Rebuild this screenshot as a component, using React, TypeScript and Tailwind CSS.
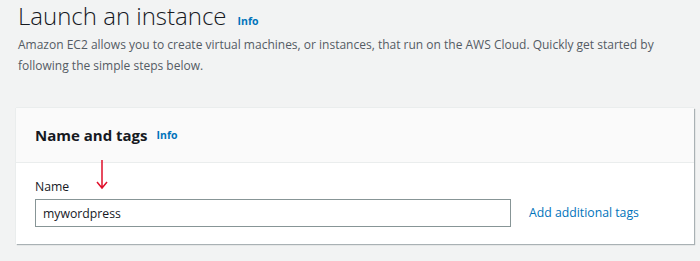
export default function App() {
  return (
    <main
      className="min-h-[261px] w-[700px] bg-[#f2f3f3] pl-[18px] pr-[6px] pt-[1px]"
      style={{ fontFamily: '"Open Sans", "Noto Sans", sans-serif' }}
    >
      <div className="flex items-baseline gap-[11px]">
        <h1 className="text-[24px] font-light leading-[30px] text-[#16191f]">Launch an instance</h1>
        <a href="#" className="text-[10.5px] font-bold text-[#0073bb]">
          Info
        </a>
      </div>

      <p className="mt-[3px] w-[660px] text-[12px] leading-[21px] text-[#545b64]">
        Amazon EC2 allows you to create virtual machines, or instances, that run on the AWS Cloud. Quickly get started by
        following the simple steps below.
      </p>

      <section className="-ml-[2px] mt-[32px] bg-white shadow-[1px_1px_1px_0_rgba(0,28,36,0.3),-1px_0_0_0_#eaeded,0_-1px_0_0_#eaeded]">
        <header className="flex h-[55px] items-center gap-[9px] border-b border-[#eaeded] bg-[#fafafa] px-[19px]">
          <h2 className="text-[15px] font-bold text-[#16191f]">Name and tags</h2>
          <a href="#" className="mt-[1px] text-[10.5px] font-bold text-[#0073bb]">
            Info
          </a>
        </header>

        <div className="relative px-[19px] pb-[17px] pt-[14px]">
          <svg className="absolute left-[79px] top-[-4px]" width="14" height="32" viewBox="0 0 14 32">
            <path d="M7 1 V29 M2 23 L7 29 L12 23" stroke="#e0102b" strokeWidth="1.5" fill="none" />
          </svg>
          <label className="block text-[12.25px] leading-[20px] text-[#16191f]">Name</label>
          <div className="mt-[2px] flex items-center gap-[18px]">
            <input
              defaultValue="mywordpress"
              className="h-[28px] w-[476px] border border-[#879596] bg-white px-[7px] text-[12.25px] text-[#16191f] outline-none"
            />
            <a href="#" className="text-[12.25px] text-[#0073bb]">
              Add additional tags
            </a>
          </div>
        </div>
      </section>
    </main>
  );
}
